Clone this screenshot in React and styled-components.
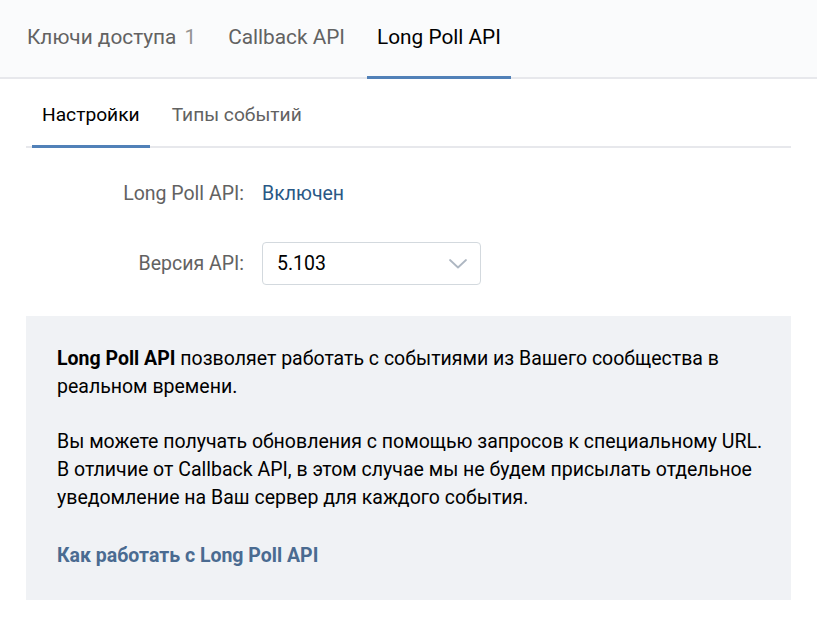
import React from "react";
import styled, { createGlobalStyle } from "styled-components";

const Global = createGlobalStyle`
  html, body { margin: 0; padding: 0; background: #fff; }
  body { font-family: Roboto, "Noto Sans", Arial, sans-serif; -webkit-font-smoothing: antialiased; }
  * { box-sizing: border-box; }
`;

const Header = styled.div`
  background: #fafbfc;
  height: 79px;
  border-bottom: 2px solid #e7e8ec;
  display: flex;
  align-items: stretch;
  padding-left: 17px;
  gap: 12px;
`;

const TopTab = styled.div`
  position: relative;
  display: flex;
  align-items: center;
  padding: 0 10px 3px;
  font-size: 20.8px;
  color: ${(p) => (p.$active ? "#000" : "#626262")};
  white-space: nowrap;
  &::after {
    content: "";
    display: ${(p) => (p.$active ? "block" : "none")};
    position: absolute;
    left: 0;
    right: 0;
    bottom: -2px;
    height: 3px;
    background: #5181b8;
  }
`;

const Count = styled.span`
  color: #939393;
  margin-left: 8px;
`;

const Content = styled.div`
  padding: 0 26px;
`;

const SubTabs = styled.div`
  height: 69px;
  border-bottom: 2px solid #e7e8ec;
  display: flex;
  align-items: stretch;
  padding-left: 6px;
  gap: 12px;
`;

const SubTab = styled.div`
  position: relative;
  display: flex;
  align-items: center;
  padding: 3px 10px 0;
  font-size: 19.2px;
  color: ${(p) => (p.$active ? "#000" : "#626262")};
  white-space: nowrap;
  &::after {
    content: "";
    display: ${(p) => (p.$active ? "block" : "none")};
    position: absolute;
    left: 0;
    right: 0;
    bottom: -2px;
    height: 3px;
    background: #5181b8;
  }
`;

const Form = styled.div`
  padding-top: 32px;
  display: flex;
  flex-direction: column;
  gap: 34px;
`;

const Row = styled.div`
  display: grid;
  grid-template-columns: 218px auto;
  column-gap: 18px;
  align-items: center;
`;

const Label = styled.div`
  text-align: right;
  font-size: 19.5px;
  line-height: 28px;
  color: #626262;
`;

const Value = styled.div`
  font-size: 19.5px;
  line-height: 28px;
  color: #2a5885;
`;

const Select = styled.div`
  width: 219px;
  height: 43px;
  border: 1px solid #d3d9de;
  border-radius: 4px;
  display: flex;
  align-items: center;
  justify-content: space-between;
  padding: 0 12px 0 14px;
  font-size: 19.5px;
  color: #000;
  background: #fff;
`;

const InfoBox = styled.div`
  margin-top: 31px;
  background: #f0f2f5;
  padding: 29px 20px 30px 31px;
  font-size: 19.5px;
  line-height: 28px;
  color: #000;
`;

const Para = styled.p`
  margin: 0 0 ${(p) => (p.$last ? "0" : "27px")};
  white-space: nowrap;
`;

const Strong = styled.b`
  font-weight: 700;
`;

const Link = styled.a`
  display: block;
  margin-top: 30px;
  font-size: 19.5px;
  font-weight: 700;
  color: #4a6b91;
  text-decoration: none;
`;

const Chevron = () => (
  <svg width="20" height="12" viewBox="0 0 20 12" fill="none">
    <path d="M2 2 L10 9.5 L18 2" stroke="#aeb7c2" strokeWidth="1.8" strokeLinecap="round" strokeLinejoin="round" />
  </svg>
);

export default function App() {
  return (
    <>
      <Global />
      <Header>
        <TopTab>
          Ключи доступа<Count>1</Count>
        </TopTab>
        <TopTab>Callback API</TopTab>
        <TopTab $active>Long Poll API</TopTab>
      </Header>
      <Content>
        <SubTabs>
          <SubTab $active>Настройки</SubTab>
          <SubTab>Типы событий</SubTab>
        </SubTabs>
        <Form>
          <Row>
            <Label>Long Poll API:</Label>
            <Value>Включен</Value>
          </Row>
          <Row>
            <Label>Версия API:</Label>
            <Select>
              <span>5.103</span>
              <Chevron />
            </Select>
          </Row>
        </Form>
        <InfoBox>
          <Para>
            <Strong>Long Poll API</Strong> позволяет работать с событиями из Вашего сообщества в
            <br />
            реальном времени.
          </Para>
          <Para $last>
            Вы можете получать обновления с помощью запросов к специальному URL.
            <br />
            В отличие от Callback API, в этом случае мы не будем присылать отдельное
            <br />
            уведомление на Ваш сервер для каждого события.
          </Para>
          <Link href="#">Как работать с Long Poll API</Link>
        </InfoBox>
      </Content>
    </>
  );
}
